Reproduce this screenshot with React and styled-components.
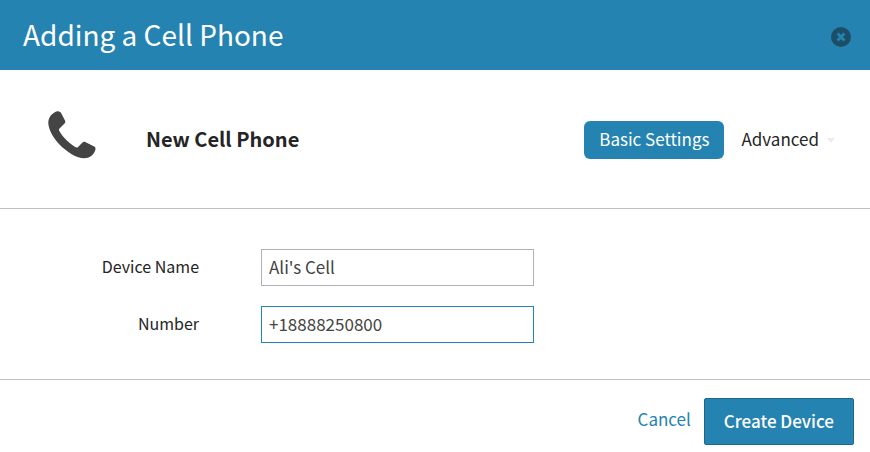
import React, { useState } from 'react';
import styled, { createGlobalStyle } from 'styled-components';

const blue = '#2583b1';

const GlobalStyle = createGlobalStyle`
  *, *::before, *::after { box-sizing: border-box; }
  body { margin: 0; background: #fff; }
  body, button, input {
    font-family: "Noto Sans CJK SC", "Noto Sans", sans-serif;
    font-weight: 400;
    color: #252525;
  }
`;

const Dialog = styled.main`
  display: flex;
  flex-direction: column;
`;

const Header = styled.header`
  display: flex;
  align-items: center;
  justify-content: space-between;
  min-height: 70px;
  padding: 0 19px 0 23px;
  background: ${blue};
`;

const Title = styled.h1`
  margin: 0;
  padding-bottom: 2px;
  color: #fff;
  font-size: 28px;
  font-weight: 400;
  line-height: 40px;
`;

const CloseButton = styled.button`
  display: flex;
  padding: 4px 0 0;
  border: 0;
  background: none;
  cursor: pointer;
`;

const Summary = styled.section`
  display: flex;
  align-items: center;
  min-height: 139px;
  padding: 0 35px 0 48px;
  border-bottom: 1px solid #bfbfbf;
`;

const PhoneIcon = styled.svg`
  width: 48px;
  height: 48px;
  margin-right: 50px;
  margin-bottom: 8px;
  fill: #444;
`;

const DeviceTitle = styled.h2`
  flex: 1;
  margin: 0;
  font-size: 20px;
  font-weight: 700;
  line-height: 32px;
`;

const Tabs = styled.nav`
  display: flex;
  align-items: center;
  gap: 2px;
  padding-top: 2px;
`;

const Tab = styled.button`
  display: flex;
  align-items: center;
  gap: 8px;
  height: 38px;
  padding: 0 ${(p) => (p.$active ? '15px 2px' : '0 2px 15px')};
  border: 0;
  border-radius: 6px;
  background: ${(p) => (p.$active ? blue : 'transparent')};
  color: ${(p) => (p.$active ? '#fff' : '#252525')};
  font-size: 17px;
  line-height: 26px;
  cursor: pointer;
`;

const Caret = styled.span`
  margin-top: 2px;
  border: 4px solid transparent;
  border-top: 5px solid #ececec;
  border-bottom: 0;
`;

const Form = styled.form`
  display: flex;
  flex-direction: column;
`;

const Fields = styled.div`
  display: flex;
  flex-direction: column;
  gap: 20px;
  padding: 40px 24px 36px;
`;

const Field = styled.div`
  display: grid;
  grid-template-columns: 175px minmax(0, 273px);
  align-items: center;
  column-gap: 62px;
`;

const Label = styled.label`
  padding-bottom: 4px;
  font-size: 16px;
  line-height: 24px;
  text-align: right;
`;

const TextInput = styled.input`
  width: 100%;
  height: 37px;
  padding: 0 7px 2px;
  border: 1px solid ${(p) => (p.$current ? blue : '#b0b0ba')};
  border-radius: 0;
  outline: 0;
  background: #fff;
  color: #444;
  font-size: 17px;
`;

const Footer = styled.footer`
  display: flex;
  justify-content: flex-end;
  align-items: center;
  gap: 13px;
  padding: 18px 16px 7px;
  border-top: 1px solid #bfbfbf;
`;

const CancelLink = styled.a`
  padding-bottom: 6px;
  color: ${blue};
  font-size: 17px;
  line-height: 26px;
  text-decoration: none;
`;

const SubmitButton = styled.button`
  height: 47px;
  padding: 0 19px 2px;
  border: 1px solid #1d678b;
  border-radius: 2px;
  background: ${blue};
  color: #fff;
  font-size: 17px;
  font-weight: 500;
  cursor: pointer;
`;

export default function App() {
  const [name, setName] = useState("Ali's Cell");
  const [number, setNumber] = useState('+18888250800');
  const [current, setCurrent] = useState('number');

  return (
    <Dialog>
      <GlobalStyle />
      <Header>
        <Title>Adding a Cell Phone</Title>
        <CloseButton type="button" aria-label="Close">
          <svg width="20" height="20" viewBox="0 0 20 20" aria-hidden="true">
            <circle cx="10" cy="10" r="10" fill="#1c4f67" />
            <path d="M7.6 7.6l4.8 4.8M12.4 7.6l-4.8 4.8" stroke={blue} strokeWidth="2.8" strokeLinecap="square" />
          </svg>
        </CloseButton>
      </Header>
      <Summary>
        <PhoneIcon viewBox="0 0 48 48" aria-hidden="true">
          <path d="M5 2.5C7 .8 9.5 .2 10.6 .4C12 .5 12.6 1.2 13.2 2.2L17 9.4C17.5 10.5 17.4 11.7 16.5 12.6L11.3 17.8C10.8 18.4 10.8 19 11.2 19.8C13.5 25 23 34.2 28.2 36.4C29 36.7 29.5 36.5 30 36L34.5 31.4C35.3 30.6 36.3 30.4 37.2 30.9L46.2 35.4C47.4 36.1 47.7 37.2 47.4 38.8C46 44 41.5 47.3 36 47.3C29 47.3 18.5 41 11 33C4.5 26 .3 18 .3 11.5C.3 8 2 4.5 5 2.5Z" />
        </PhoneIcon>
        <DeviceTitle>New Cell Phone</DeviceTitle>
        <Tabs>
          <Tab type="button" $active>Basic Settings</Tab>
          <Tab type="button">Advanced<Caret /></Tab>
        </Tabs>
      </Summary>
      <Form onSubmit={(e) => e.preventDefault()}>
        <Fields>
          <Field>
            <Label htmlFor="device-name">Device Name</Label>
            <TextInput
              id="device-name"
              value={name}
              $current={current === 'name'}
              onFocus={() => setCurrent('name')}
              onChange={(e) => setName(e.target.value)}
            />
          </Field>
          <Field>
            <Label htmlFor="device-number">Number</Label>
            <TextInput
              id="device-number"
              type="tel"
              value={number}
              $current={current === 'number'}
              onFocus={() => setCurrent('number')}
              onChange={(e) => setNumber(e.target.value)}
            />
          </Field>
        </Fields>
        <Footer>
          <CancelLink href="#cancel">Cancel</CancelLink>
          <SubmitButton type="submit">Create Device</SubmitButton>
        </Footer>
      </Form>
    </Dialog>
  );
}
